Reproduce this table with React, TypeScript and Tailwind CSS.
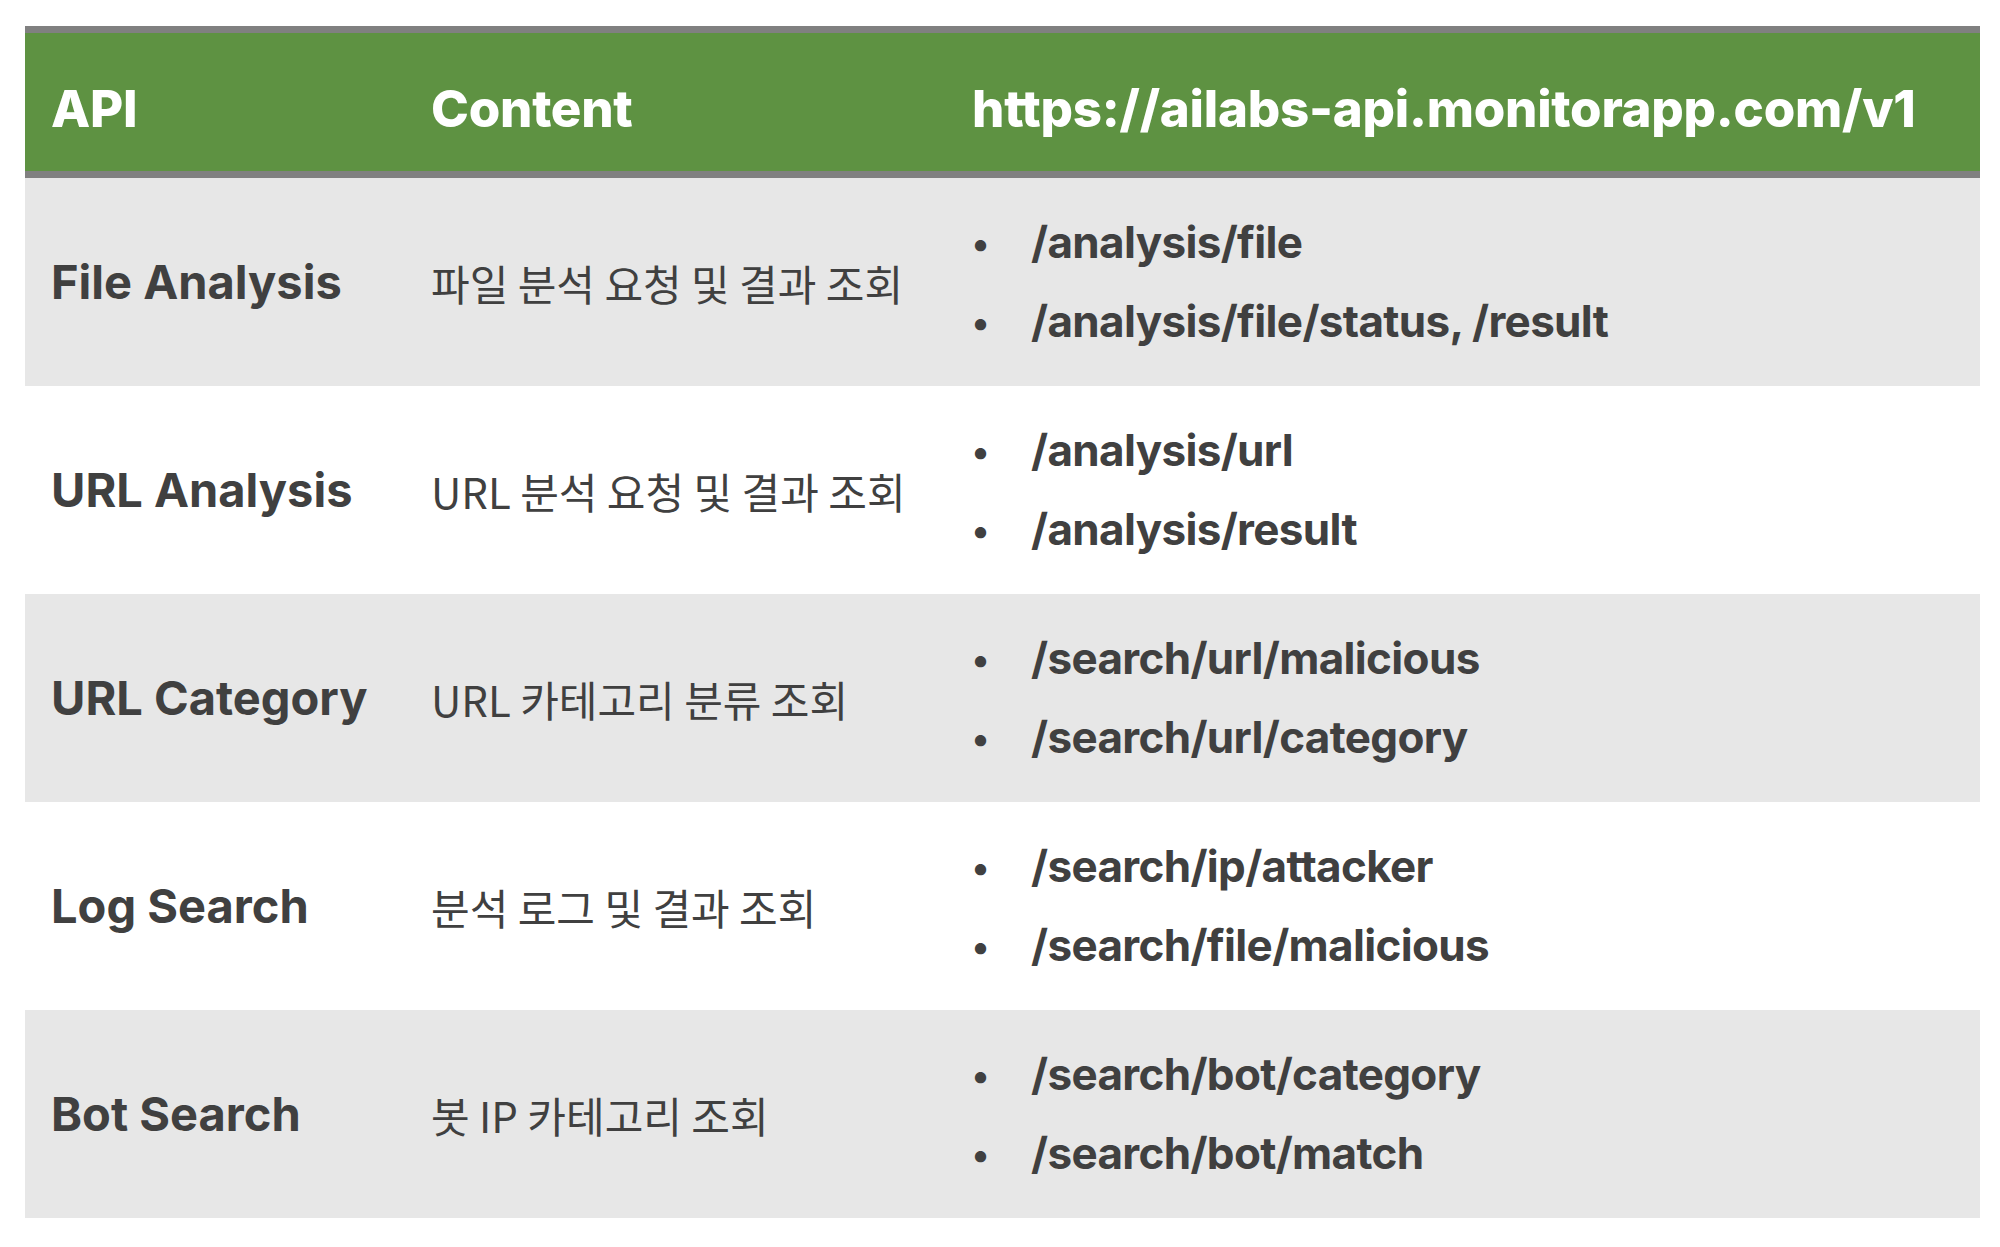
const rows = [
  {
    api: "File Analysis",
    content: "파일 분석 요청 및 결과 조회",
    paths: ["/analysis/file", "/analysis/file/status, /result"],
  },
  {
    api: "URL Analysis",
    content: "URL 분석 요청 및 결과 조회",
    paths: ["/analysis/url", "/analysis/result"],
  },
  {
    api: "URL Category",
    content: "URL 카테고리 분류 조회",
    paths: ["/search/url/malicious", "/search/url/category"],
  },
  {
    api: "Log Search",
    content: "분석 로그 및 결과 조회",
    paths: ["/search/ip/attacker", "/search/file/malicious"],
  },
  {
    api: "Bot Search",
    content: "봇 IP 카테고리 조회",
    paths: ["/search/bot/category", "/search/bot/match"],
  },
];

const font = "font-['Inter','Noto_Sans_CJK_KR',sans-serif]";

export default function App() {
  return (
    <div className={`min-h-screen bg-white pl-[25px] pr-[20px] pt-[26px] ${font}`}>
      <div className="grid grid-cols-[406px_541px_1fr] border-y-[7px] border-[#808080] bg-[#5e9242] h-[152px] items-center text-white font-extrabold text-[51px] tracking-[-0.005em]">
        <div className="pl-[26px] pt-[15px]">API</div>
        <div className="pt-[15px]">Content</div>
        <div className="pt-[15px]">https://ailabs-api.monitorapp.com/v1</div>
      </div>
      {rows.map((row, i) => (
        <div
          key={row.api}
          className={`grid grid-cols-[406px_541px_1fr] items-center h-[208px] text-[#404040] ${
            i % 2 === 0 ? "bg-[#e7e7e7]" : "bg-white"
          }`}
        >
          <div className="pl-[26px] font-bold text-[47px]">{row.api}</div>
          <div className="text-[42px] font-['Noto_Sans_CJK_KR',sans-serif] font-normal">
            {row.content}
          </div>
          <ul className="flex flex-col gap-[20px] font-bold text-[44px] tracking-[-0.015em]">
            {row.paths.map((p) => (
              <li key={p} className="flex items-center">
                <span className="w-[59px] text-[36px] leading-none">•</span>
                <span className="leading-[59px]">{p}</span>
              </li>
            ))}
          </ul>
        </div>
      ))}
    </div>
  );
}
